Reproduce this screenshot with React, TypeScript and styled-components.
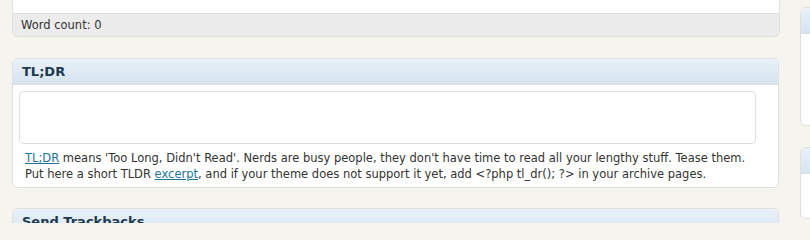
import React from "react";
import styled, { createGlobalStyle } from "styled-components";

const Global = createGlobalStyle`
  html, body { margin: 0; padding: 0; background: #f5f4ef; }
  body { font-family: "DejaVu Sans", Verdana, sans-serif; font-size: 11.5px; color: #333; }
`;

const Page = styled.div`
  display: flex;
  align-items: flex-start;
  gap: 20px;
  padding-left: 12px;
  width: 810px;
  box-sizing: border-box;
  height: 223px;
  overflow: hidden;
`;

const MainCol = styled.div`
  width: 768px;
  flex-shrink: 0;
  display: flex;
  flex-direction: column;
`;

const SideCol = styled.div`
  width: 280px;
  flex-shrink: 0;
  display: flex;
  flex-direction: column;
  gap: 21px;
  padding-top: 7px;
`;

const EditorBox = styled.div`
  height: 37px;
  box-sizing: border-box;
  border: 1px solid #dfdfdf;
  border-top: none;
  border-radius: 0 0 6px 6px;
  background: #fff;
  display: flex;
  flex-direction: column;
  justify-content: flex-end;
  overflow: hidden;
`;

const StatusBar = styled.div`
  height: 23px;
  box-sizing: border-box;
  border-top: 1px solid #dfdfdf;
  background: #ececec;
  padding-left: 8px;
  display: flex;
  align-items: center;
  color: #333;
`;

const Box = styled.div<{ $w?: number; $mt?: number; $h?: number }>`
  margin-top: ${(p) => p.$mt ?? 0}px;
  width: ${(p) => (p.$w ? `${p.$w}px` : "auto")};
  ${(p) => (p.$h ? `height: ${p.$h}px;` : "")}
  border: 1px solid #dfdfdf;
  border-radius: 6px;
  background: #fff;
  overflow: hidden;
  box-sizing: border-box;
  flex-shrink: 0;
`;

const Header = styled.h3`
  margin: 0;
  height: 25px;
  padding-left: 9px;
  display: flex;
  align-items: center;
  background: linear-gradient(to bottom, #e9f1f9, #d6e4f0);
  border-bottom: 1px solid #dfdfdf;
  font-size: 13px;
  font-weight: bold;
  color: #1d3a4d;
`;

const Inside = styled.div`
  padding: 6px 22px 5px 6px;
`;

const TextArea = styled.div`
  height: 51px;
  border: 1px solid #dfdfdf;
  border-radius: 4px;
  background: #fff;
`;

const Help = styled.p`
  margin: 6px 0 0 6px;
  line-height: 16px;
  color: #333;
`;

const Link = styled.a`
  color: #21759b;
  text-decoration: underline;
`;

export default function App() {
  return (
    <>
      <Global />
      <Page>
        <MainCol>
          <EditorBox>
            <StatusBar>Word count: 0</StatusBar>
          </EditorBox>
          <Box $w={767} $mt={21}>
            <Header>TL;DR</Header>
            <Inside>
              <TextArea />
              <Help>
                <Link href="#">TL;DR</Link> means 'Too Long, Didn't Read'. Nerds are busy people, they don't have time to read all your lengthy stuff. Tease them.
                <br />
                Put here a short TLDR <Link href="#">excerpt</Link>, and if your theme does not support it yet, add &lt;?php tl_dr(); ?&gt; in your archive pages.
              </Help>
            </Inside>
          </Box>
          <Box $w={767} $mt={20} $h={60}>
            <Header>Send Trackbacks</Header>
          </Box>
        </MainCol>
        <SideCol>
          <Box $h={119}>
            <Header />
          </Box>
          <Box $h={72}>
            <Header />
          </Box>
        </SideCol>
      </Page>
    </>
  );
}
